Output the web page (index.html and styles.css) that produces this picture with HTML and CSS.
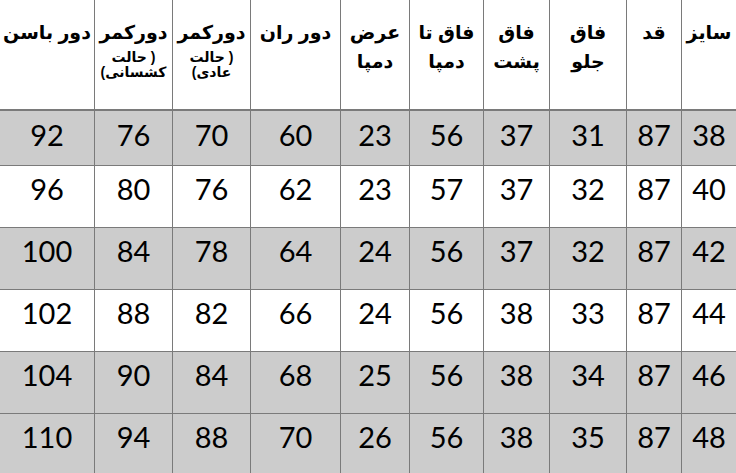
FILE: index.html
```html
<!DOCTYPE html>
<html lang="fa" dir="rtl">
<head>
<meta charset="utf-8">
<title>جدول سایز</title>
<link rel="stylesheet" href="styles.css">
</head>
<body>
<div class="size-table">
  <div class="row head">
    <div class="cell">سایز</div>
    <div class="cell">قد</div>
    <div class="cell">فاق<br>جلو</div>
    <div class="cell">فاق<br>پشت</div>
    <div class="cell">فاق تا<br>دمپا</div>
    <div class="cell">عرض<br>دمپا</div>
    <div class="cell">دور ران</div>
    <div class="cell">دورکمر<span class="sub" dir="ltr">حالت )<br>(عادی</span></div>
    <div class="cell">دورکمر<span class="sub" dir="ltr">حالت )<br>(کشسانی</span></div>
    <div class="cell">دور باسن</div>
  </div>
  <div class="row gray first">
    <div class="cell">38</div><div class="cell">87</div><div class="cell">31</div><div class="cell">37</div><div class="cell">56</div><div class="cell">23</div><div class="cell">60</div><div class="cell">70</div><div class="cell">76</div><div class="cell">92</div>
  </div>
  <div class="row">
    <div class="cell">40</div><div class="cell">87</div><div class="cell">32</div><div class="cell">37</div><div class="cell">57</div><div class="cell">23</div><div class="cell">62</div><div class="cell">76</div><div class="cell">80</div><div class="cell">96</div>
  </div>
  <div class="row gray">
    <div class="cell">42</div><div class="cell">87</div><div class="cell">32</div><div class="cell">37</div><div class="cell">56</div><div class="cell">24</div><div class="cell">64</div><div class="cell">78</div><div class="cell">84</div><div class="cell">100</div>
  </div>
  <div class="row">
    <div class="cell">44</div><div class="cell">87</div><div class="cell">33</div><div class="cell">38</div><div class="cell">56</div><div class="cell">24</div><div class="cell">66</div><div class="cell">82</div><div class="cell">88</div><div class="cell">102</div>
  </div>
  <div class="row gray">
    <div class="cell">46</div><div class="cell">87</div><div class="cell">34</div><div class="cell">38</div><div class="cell">56</div><div class="cell">25</div><div class="cell">68</div><div class="cell">84</div><div class="cell">90</div><div class="cell">104</div>
  </div>
  <div class="row gray">
    <div class="cell">48</div><div class="cell">87</div><div class="cell">35</div><div class="cell">38</div><div class="cell">56</div><div class="cell">26</div><div class="cell">70</div><div class="cell">88</div><div class="cell">94</div><div class="cell">110</div>
  </div>
</div>
</body>
</html>
```
FILE: styles.css
```css
html, body {
  margin: 0;
  padding: 0;
  background: #ffffff;
  overflow: hidden;
}

.size-table {
  direction: rtl;
  width: 736px;
  display: grid;
  grid-template-columns: 55px 55px 77px 66px 74px 69px 90px 78px 78px 94px;
  grid-template-rows: 111px 55px repeat(5, 62px);
  color: #000;
}

.row {
  display: contents;
}

.cell {
  box-sizing: border-box;
  border-left: 1px solid #7a7a7a;
  border-bottom: 1px solid #7a7a7a;
  text-align: center;
  font-family: "Lato", "Liberation Sans", sans-serif;
  font-size: 29px;
  line-height: 29px;
  padding-top: 8px;
}

.cell:last-child {
  border-left: none;
}

.row.first .cell {
  padding-top: 9px;
}

.row.gray .cell {
  background: #cccccc;
}

.row.head .cell {
  font-family: "Liberation Sans", "DejaVu Sans", sans-serif;
  font-weight: bold;
  font-size: 19px;
  line-height: 29px;
  padding-top: 18px;
  border-bottom: 2px solid #7a7a7a;
}

.row.head .cell .sub {
  display: block;
  margin-top: 3px;
  font-size: 14px;
  line-height: 15px;
}
```
